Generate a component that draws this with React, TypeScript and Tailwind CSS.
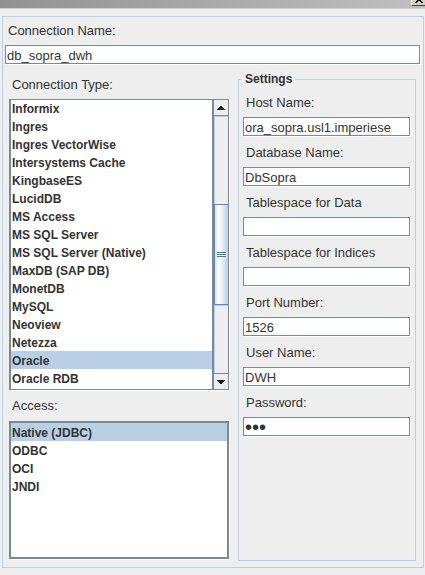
import { useState } from 'react'

const connectionTypes = [
  'Informix',
  'Ingres',
  'Ingres VectorWise',
  'Intersystems Cache',
  'KingbaseES',
  'LucidDB',
  'MS Access',
  'MS SQL Server',
  'MS SQL Server (Native)',
  'MaxDB (SAP DB)',
  'MonetDB',
  'MySQL',
  'Neoview',
  'Netezza',
  'Oracle',
  'Oracle RDB',
]

const accessTypes = ['Native (JDBC)', 'ODBC', 'OCI', 'JNDI']

const settings = [
  { id: 'host', label: 'Host Name:', value: 'ora_sopra.usl1.imperiese' },
  { id: 'database', label: 'Database Name:', value: 'DbSopra' },
  { id: 'data-space', label: 'Tablespace for Data', value: '' },
  { id: 'index-space', label: 'Tablespace for Indices', value: '' },
  { id: 'port', label: 'Port Number:', value: '1526' },
  { id: 'user', label: 'User Name:', value: 'DWH' },
  { id: 'password', label: 'Password:', value: 'dwh', type: 'password' },
]

const inputBox =
  'block h-[19px] w-full rounded-none border border-[#7a8a99] bg-white px-px pt-[2px] leading-[15px] text-[#333] shadow-[1px_1px_0_white] outline-none'

const inputStyle = `${inputBox} text-[13px]`

const passwordStyle = `${inputBox} text-[20px]`

const listStyle =
  'block min-w-0 flex-1 appearance-none overflow-hidden rounded-none border-0 bg-white bg-none p-0 text-xs font-bold text-[#333] outline-none'

const optionStyle =
  'block h-[18px] min-h-0 p-0 pt-[3px] pl-px text-xs font-bold text-[#333] [-webkit-text-fill-color:#333] checked:bg-linear-to-r checked:from-[#b8cfe5] checked:to-[#b8cfe5]'

function ScrollBar() {
  return (
    <div className="flex w-[14px] flex-col bg-[#eee]">
      <button type="button" aria-label="Scroll up" className="flex h-4 items-center justify-center border-b border-[#7a8a99]">
        <svg width="8" height="4" viewBox="0 0 8 4" fill="#222" shapeRendering="crispEdges">
          <path d="M3 0h2v1h1v1h1v1h1v1H0V3h1V2h1V1h1z" />
        </svg>
      </button>
      <div className="flex flex-1 flex-col border-t border-l border-[#b8cfe5]">
        <div className="h-[87px]" />
        <div className="-ml-px flex h-[101px] flex-col items-center justify-center gap-px border-y border-l border-[#6382bf] bg-linear-to-r from-[#dce8f4] via-white via-30% to-[#b8cfe5]">
          <span className="h-px w-[9px] bg-[#4a6fb5] shadow-[1px_1px_0_white]" />
          <span className="h-px w-[9px] bg-[#4a6fb5] shadow-[1px_1px_0_white]" />
          <span className="h-px w-[9px] bg-[#4a6fb5] shadow-[1px_1px_0_white]" />
        </div>
        <div className="flex-1 border-t border-[#b8cfe5]" />
      </div>
      <button type="button" aria-label="Scroll down" className="flex h-4 items-center justify-center border-t border-[#7a8a99]">
        <svg width="8" height="4" viewBox="0 0 8 4" fill="#222" shapeRendering="crispEdges">
          <path d="M0 0h8v1H7v1H6v1H5v1H3V3H2V2H1V1H0z" />
        </svg>
      </button>
    </div>
  )
}

export default function App() {
  const [type, setType] = useState('Oracle')
  const [access, setAccess] = useState('Native (JDBC)')

  return (
    <div className="min-h-screen bg-[#eee] font-['Liberation_Sans',Arial,sans-serif] text-[13px] text-[#333]">
      <header className="flex h-[9px] items-start justify-end border-b border-[#d4d0c8] bg-linear-to-r from-[#929292] to-[#c0c0c0]">
        <button
          type="button"
          aria-label="Close"
          className="flex h-[6px] w-[14px] items-start justify-center border-b border-l border-b-[#404040] border-l-white bg-[#d4d0c8]"
        >
          <svg width="8" height="3" viewBox="0 0 8 3" fill="#000" shapeRendering="crispEdges">
            <path d="M2 0h4v1H2zM1 1h2v1H1zM5 1h2v1H5zM0 2h2v1H0zM6 2h2v1H6z" />
          </svg>
        </button>
      </header>

      <main className="mt-[7px] mr-px ml-[2px] border border-[#b8cfe5] pr-[3px] pb-[6px] pl-[2px]">
        <label htmlFor="name" className="block pl-[3px] leading-[28px]">
          Connection Name:
        </label>
        <input id="name" defaultValue="db_sopra_dwh" className={inputStyle} />

        <div className="grid grid-cols-[220fr_178fr] gap-[9px] px-1 pt-[7px]">
          <div className="min-w-0 pb-[2px]">
            <label htmlFor="type" className="block pl-[3px] leading-[28px]">
              Connection Type:
            </label>
            <div className="flex h-[291px] border border-l-2 border-[#7a8a99] bg-white shadow-[1px_1px_0_white]">
              <select id="type" size={16} value={type} onChange={(e) => setType(e.target.value)} className={listStyle}>
                {connectionTypes.map((name) => (
                  <option key={name} className={`${optionStyle} first:h-[17px] first:pt-[2px]`}>
                    {name}
                  </option>
                ))}
              </select>
              <div className="w-[2px] bg-[#7a8a99]" />
              <ScrollBar />
            </div>

            <label htmlFor="access" className="block pl-[3px] leading-[31px]">
              Access:
            </label>
            <div className="flex h-[138px] border-2 border-[#7a8a99] bg-white shadow-[1px_1px_0_white]">
              <select id="access" size={4} value={access} onChange={(e) => setAccess(e.target.value)} className={listStyle}>
                {accessTypes.map((name) => (
                  <option key={name} className={optionStyle}>
                    {name}
                  </option>
                ))}
              </select>
            </div>
          </div>

          <fieldset className="min-w-0 border border-[#b8cfe5] pt-[2px] pr-[5px] pl-1">
            <legend className="-ml-px px-[3px] text-xs leading-4 font-bold">Settings</legend>
            {settings.map(({ id, label, value, type: kind }) => (
              <div key={id} className="mb-[3px]">
                <label htmlFor={id} className="block pl-[3px] leading-[28px]">
                  {label}
                </label>
                <input id={id} type={kind ?? 'text'} defaultValue={value} className={kind ? passwordStyle : inputStyle} />
              </div>
            ))}
          </fieldset>
        </div>
      </main>
    </div>
  )
}
